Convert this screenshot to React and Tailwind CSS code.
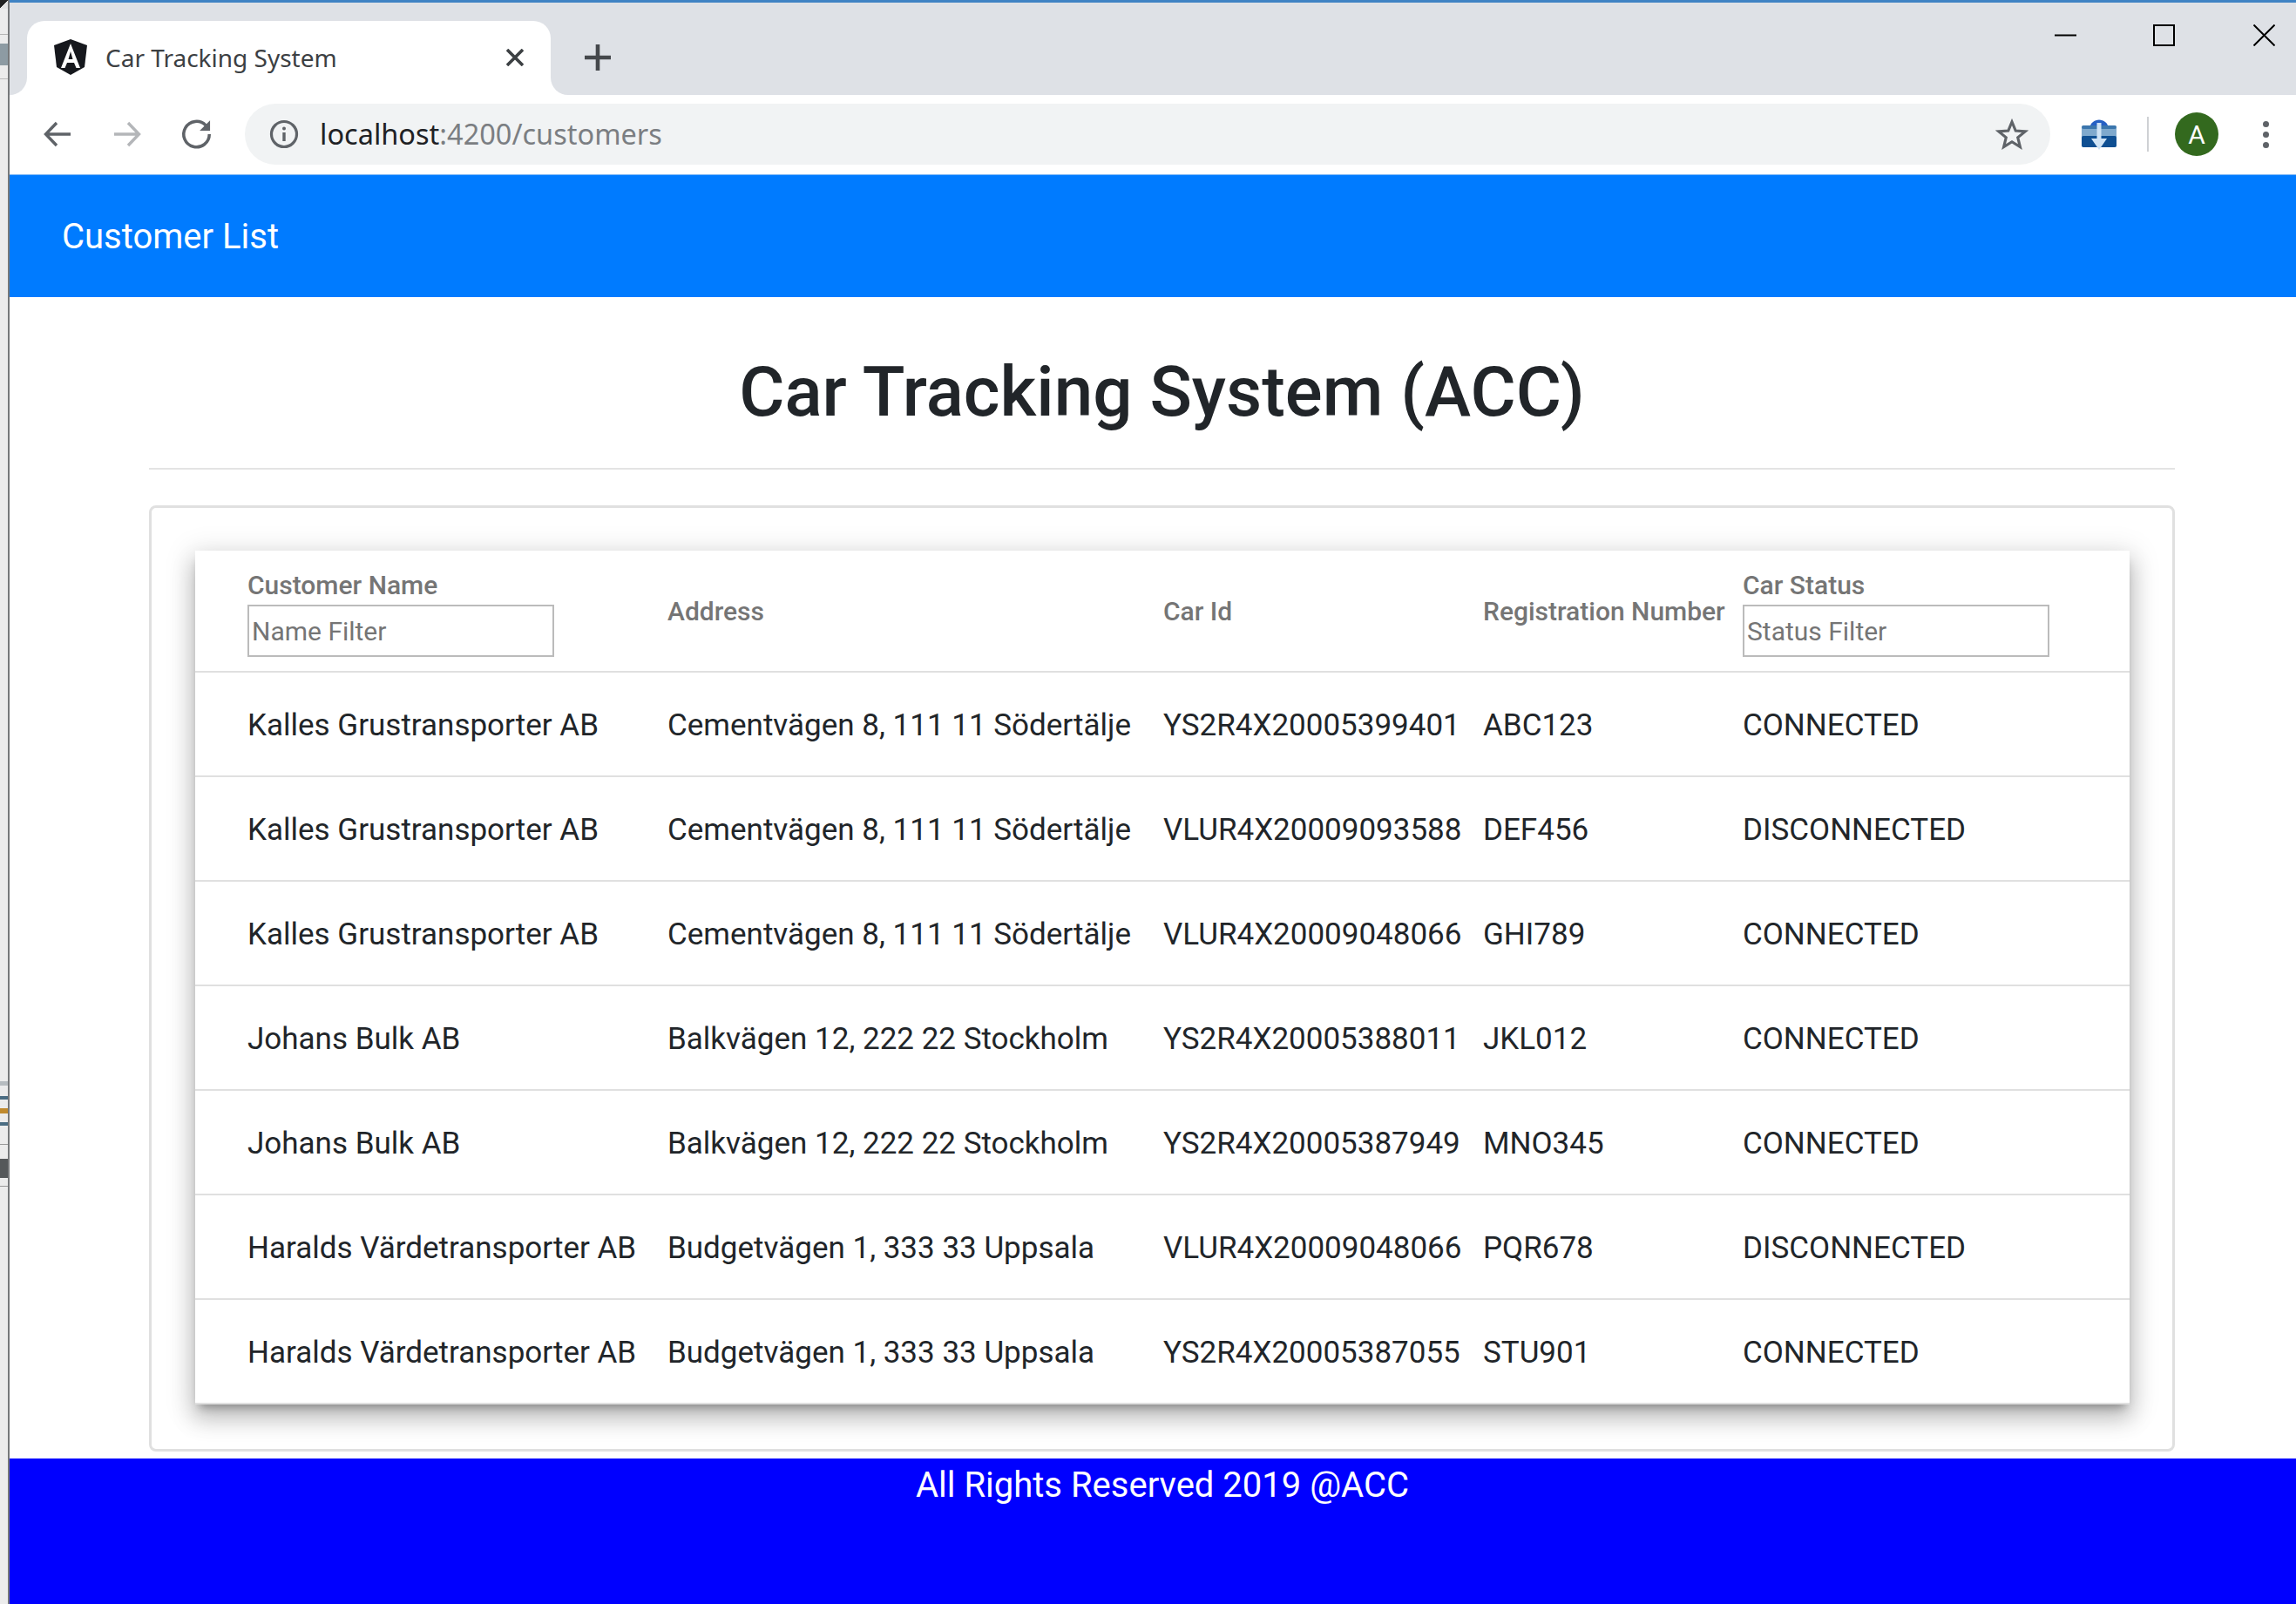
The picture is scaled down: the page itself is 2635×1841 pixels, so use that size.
import React from "react";

const rows = [
  ["Kalles Grustransporter AB", "Cementvägen 8, 111 11 Södertälje", "YS2R4X20005399401", "ABC123", "CONNECTED"],
  ["Kalles Grustransporter AB", "Cementvägen 8, 111 11 Södertälje", "VLUR4X20009093588", "DEF456", "DISCONNECTED"],
  ["Kalles Grustransporter AB", "Cementvägen 8, 111 11 Södertälje", "VLUR4X20009048066", "GHI789", "CONNECTED"],
  ["Johans Bulk AB", "Balkvägen 12, 222 22 Stockholm", "YS2R4X20005388011", "JKL012", "CONNECTED"],
  ["Johans Bulk AB", "Balkvägen 12, 222 22 Stockholm", "YS2R4X20005387949", "MNO345", "CONNECTED"],
  ["Haralds Värdetransporter AB", "Budgetvägen 1, 333 33 Uppsala", "VLUR4X20009048066", "PQR678", "DISCONNECTED"],
  ["Haralds Värdetransporter AB", "Budgetvägen 1, 333 33 Uppsala", "YS2R4X20005387055", "STU901", "CONNECTED"],
];

const gridCols = "grid grid-cols-[482px_569px_367px_298px_1fr] pl-[60px] items-center";

// desktop window peeking out on the left
const LeftStrip = () => (
  <div className="w-[11px] shrink-0 flex flex-col bg-[#ececec] border-r-[2px] border-[#76787a]">
    <div className="h-[10px] bg-[linear-gradient(135deg,#222_50%,#e4e4e4_50%)]" />
    <div className="h-[30px] border-b border-[#b5b5b5]" />
    <div className="h-[25px] mt-[10px] bg-[#8d9ba3]" />
    <div className="h-[16px] border-b border-[#bbb]" />
    <div className="h-[1150px]" />
    <div className="h-[5px] bg-[#b6bcc0]" />
    <div className="h-[12px]" />
    <div className="h-[4px] bg-[#4a6c82]" />
    <div className="h-[10px]" />
    <div className="h-[6px] bg-[#c08a2e]" />
    <div className="h-[10px]" />
    <div className="h-[4px] bg-[#4a6c82]" />
    <div className="h-[22px] border-b border-[#999]" />
    <div className="h-[16px]" />
    <div className="h-[22px] bg-[#55585a]" />
    <div className="h-[10px] border-b border-[#999]" />
  </div>
);

const AngularLogo = () => (
  <svg width="40" height="41" viewBox="0 0 40 41" className="shrink-0">
    <path d="M20 0 L39 7 L36 32 L20 41 L4 32 L1 7 Z" fill="#16181d" />
    <path d="M20 5 L31 33 L26.5 33 L24 27 L16 27 L13.5 33 L9 33 Z M20 14 L17.5 23 L22.5 23 Z" fill="#fff" fillRule="evenodd" />
  </svg>
);

const Arrow = ({ color, flip }) => (
  <svg width="32" height="32" viewBox="0 0 32 32" className={flip ? "rotate-180" : ""}>
    <path d="M31 16 H3 M15 3 L2.5 16 L15 29" fill="none" stroke={color} strokeWidth="3.4" />
  </svg>
);

const ExtIcon = () => (
  <svg width="40" height="36" viewBox="0 0 40 36">
    <path d="M9 12 C10 -2 30 -2 31 12 Z" fill="#2660c4" />
    <rect x="0" y="8" width="40" height="25" rx="3" fill="#7fa9cd" />
    <rect x="0" y="8" width="40" height="4" rx="2" fill="#3b76ad" />
    <rect x="0" y="20" width="40" height="13" rx="2" fill="#0f4f92" />
    <path d="M17.5 5 H22.5 V23 H29 L20 36 L11 23 H17.5 Z" fill="#cfe3f5" />
  </svg>
);

const HeaderFilter = ({ label, placeholder }) => (
  <div className="flex flex-col">
    <span className="h-[40px] leading-[40px] mt-[3px] mb-[2px]">{label}</span>
    <input
      readOnly
      placeholder={placeholder}
      className="w-[352px] h-[60px] border-[2px] border-[#bbbbbb] pl-[3px] pt-[1px] text-[30px] font-normal placeholder:text-[#757575] outline-none"
    />
  </div>
);

const App = () => {
  return (
    <div className="w-[2635px] h-[1841px] flex overflow-hidden bg-white font-['Roboto',sans-serif] text-[#212529]">
      <LeftStrip />
      <div className="flex-1 min-w-0 flex flex-col">
        {/* browser chrome */}
        <div className="h-[109px] shrink-0 flex items-end bg-[#dee1e6] border-t-[3px] border-[#3f83c4] relative">
          <div className="w-5 h-5 bg-white"><div className="w-full h-full bg-[#dee1e6] rounded-br-[20px]" /></div>
          <div className="w-[601px] h-[85px] bg-white rounded-t-[20px] flex items-center pl-[30px] pb-[2px]">
            <AngularLogo />
            <span className="ml-[20px] text-[28px] text-[#3c4043] font-['Noto_Sans',sans-serif]">Car Tracking System</span>
            <svg width="20" height="20" viewBox="0 0 20 20" className="ml-auto mr-[31px]">
              <path d="M1 1 L19 19 M19 1 L1 19" stroke="#3c4043" strokeWidth="3.6" />
            </svg>
          </div>
          <div className="w-5 h-5 bg-white"><div className="w-full h-full bg-[#dee1e6] rounded-bl-[20px]" /></div>
          <svg width="30" height="30" viewBox="0 0 30 30" className="ml-[19px] mb-[28px]">
            <path d="M15 0 V30 M0 15 H30" stroke="#45484c" strokeWidth="4.6" />
          </svg>
          <div className="ml-auto self-start flex items-center pt-[25px] pr-[24px]">
            <svg width="25" height="25" viewBox="0 0 25 25"><path d="M0 12.5 H25" stroke="#000" strokeWidth="2" /></svg>
            <svg width="25" height="25" viewBox="0 0 25 25" className="ml-[88px]"><rect x="1" y="1" width="23" height="23" fill="none" stroke="#000" strokeWidth="2" /></svg>
            <svg width="25" height="25" viewBox="0 0 25 25" className="ml-[90px]"><path d="M0.5 0.5 L24.5 24.5 M24.5 0.5 L0.5 24.5" stroke="#000" strokeWidth="2" /></svg>
          </div>
        </div>

        {/* toolbar */}
        <div className="h-[91px] shrink-0 flex items-center bg-white pb-[1px]">
          <div className="ml-[39px]"><Arrow color="#5f6368" /></div>
          <div className="ml-[48px]"><Arrow color="#b4b6b9" flip /></div>
          <svg width="38" height="38" viewBox="0 0 24 24" fill="none" className="ml-[45px]">
            <path d="M21 12 A9.3 9.3 0 1 1 18.4 5.6" stroke="#5f6368" strokeWidth="2.2" />
            <path d="M21.5 2 V9.5 H14 Z" fill="#5f6368" />
          </svg>
          <div className="ml-[36px] w-[2072px] h-[70px] rounded-full bg-[#f1f3f4] flex items-center pl-[28px]">
            <svg width="34" height="34" viewBox="0 0 34 34">
              <circle cx="17" cy="17" r="14.5" fill="none" stroke="#5f6368" strokeWidth="3.2" />
              <circle cx="17" cy="10.5" r="2" fill="#5f6368" />
              <path d="M17 15 V25" stroke="#5f6368" strokeWidth="3.4" />
            </svg>
            <span className="ml-[24px] text-[32.5px] text-[#202124] font-['Noto_Sans',sans-serif]">
              localhost<span className="text-[#7b7e82]">:4200/customers</span>
            </span>
            <svg width="38" height="36" viewBox="0 0 24 23" className="ml-auto mr-[25px]">
              <path d="M12 2.5 L14.7 9 L21.7 9.5 L16.3 14 L18 20.8 L12 17.1 L6 20.8 L7.7 14 L2.3 9.5 L9.3 9 Z" fill="none" stroke="#5f6368" strokeWidth="2" />
            </svg>
          </div>
          <div className="ml-[36px]"><ExtIcon /></div>
          <div className="ml-[35px] w-[2px] h-[40px] bg-[#cfd1d4]" />
          <div className="ml-[30px] w-[50px] h-[50px] rounded-full bg-[#33691e] text-white text-[30px] flex items-center justify-center">A</div>
          <div className="ml-[51px] flex flex-col gap-[5px]">
            <div className="w-[7px] h-[7px] rounded-full bg-[#5f6368]" />
            <div className="w-[7px] h-[7px] rounded-full bg-[#5f6368]" />
            <div className="w-[7px] h-[7px] rounded-full bg-[#5f6368]" />
          </div>
        </div>

        {/* page */}
        <div className="h-[141px] shrink-0 bg-[#007bff] border-t-[1px] border-[#78b5f5] flex items-center pl-[60px] pt-[2px] text-white text-[40px]">
          Customer List
        </div>

        <div className="pl-[160px] pr-[139px]">
          <h1 className="h-[196px] flex items-center justify-center text-[80px] font-medium pt-[22px]">Car Tracking System (ACC)</h1>
          <div className="h-[2px] bg-[#e3e3e3]" />
          <div className="mt-[41px] h-[1086px] border-[3px] border-[#e0e0e0] rounded-[8px] pt-[49px] pl-[50px] pr-[49px]">
            <div className="bg-white shadow-[0_8px_10px_-5px_rgba(0,0,0,.3),0_16px_24px_2px_rgba(0,0,0,.17),0_6px_30px_5px_rgba(0,0,0,.13)]">
              <div className={`${gridCols} h-[140px] border-b-[2px] border-[#e0e0e0] text-[30px] font-medium text-[#757575]`}>
                <HeaderFilter label="Customer Name" placeholder="Name Filter" />
                <span>Address</span>
                <span>Car Id</span>
                <span>Registration Number</span>
                <HeaderFilter label="Car Status" placeholder="Status Filter" />
              </div>
              {rows.map((row, i) => (
                <div key={i} className={`${gridCols} h-[120px] border-b-[2px] border-[#e0e0e0] text-[35px] pt-[4px]`}>
                  {row.map((cell, j) => (
                    <span key={j} className="whitespace-nowrap">{cell}</span>
                  ))}
                </div>
              ))}
            </div>
          </div>
        </div>

        <div className="mt-[8px] flex-1 bg-[#0000ff] text-white text-[40px] text-center pl-[22px] pt-[1px]">
          All Rights Reserved 2019 @ACC
        </div>
      </div>
    </div>
  );
};

export default App;
